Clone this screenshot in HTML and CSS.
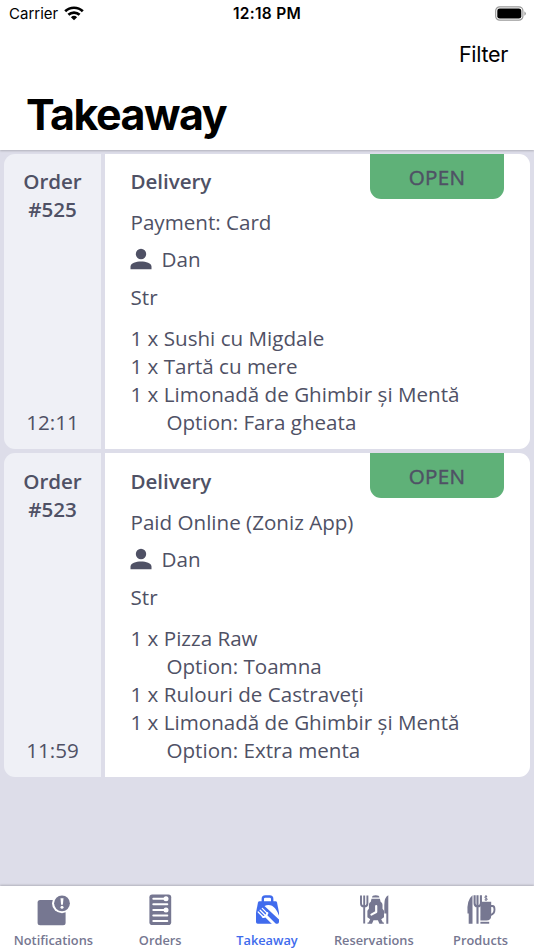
FILE: index.html
```html
<!DOCTYPE html>
<html lang="en">
<head>
<meta charset="utf-8">
<title>Takeaway</title>
<link rel="stylesheet" href="styles.css">
</head>
<body>
<div class="app">
  <header class="header">
    <div class="status">
      <div class="carrier"><span class="carrier-name">Carrier</span>
        <svg class="wifi" width="20" height="15" viewBox="0 0 20 15"><g fill="none" stroke="#000" stroke-width="2.7"><path d="M1.2 5.3a12.7 12.7 0 0 1 17.6 0"/><path d="M4.4 8.8a8.1 8.1 0 0 1 11.2 0"/></g><path d="M10 14.3l-3.1-3.1a4.5 4.5 0 0 1 6.2 0z"/></svg>
      </div>
      <span class="clock">12:18 PM</span>
      <svg class="battery" width="32" height="16" viewBox="0 0 32 16"><rect x=".7" y=".8" width="27.2" height="13.4" rx="4" fill="#fff" stroke="#999" stroke-width="1.2"/><rect x="2.3" y="2.4" width="24" height="10.2" rx="2.4"/><path d="M29.4 5.2q3 2.3 0 4.6z" fill="#999"/></svg>
    </div>
    <div class="actions"><span class="filter">Filter</span></div>
    <h1 class="title">Takeaway</h1>
  </header>
  <main class="orders">
    <article class="card">
      <div class="side"><div class="number">Order<br>#525</div><time>12:11</time></div>
      <div class="detail">
        <span class="badge">OPEN</span>
        <h2>Delivery</h2>
        <p class="payment">Payment: Card</p>
        <p class="person"><svg width="22" height="22" viewBox="0 0 22 22"><circle cx="11" cy="6" r="5.2"/><path d="M.5 21.3v-2.5C.5 15 6 13.5 11 13.5s10.500 1.500 10.500 5.300v2.500z"/></svg><span>Dan</span></p>
        <p class="street">Str</p>
        <ul>
          <li>1 x Sushi cu Migdale</li>
          <li>1 x Tartă cu mere</li>
          <li>1 x Limonadă de Ghimbir și Mentă</li>
          <li class="option">Option: Fara gheata</li>
        </ul>
      </div>
    </article>
    <article class="card">
      <div class="side"><div class="number">Order<br>#523</div><time>11:59</time></div>
      <div class="detail">
        <span class="badge">OPEN</span>
        <h2>Delivery</h2>
        <p class="payment">Paid Online (Zoniz App)</p>
        <p class="person"><svg width="22" height="22" viewBox="0 0 22 22"><circle cx="11" cy="6" r="5.2"/><path d="M.5 21.3v-2.5C.5 15 6 13.5 11 13.5s10.500 1.500 10.500 5.300v2.500z"/></svg><span>Dan</span></p>
        <p class="street">Str</p>
        <ul>
          <li>1 x Pizza Raw</li>
          <li class="option">Option: Toamna</li>
          <li>1 x Rulouri de Castraveți</li>
          <li>1 x Limonadă de Ghimbir și Mentă</li>
          <li class="option">Option: Extra menta</li>
        </ul>
      </div>
    </article>
  </main>
  <nav class="tabs">
    <div class="tab"><svg width="34" height="32" viewBox="0 0 34 32"><rect x="1.600" y="6" width="28" height="25.300" rx="2.500"/><circle cx="26" cy="9.300" r="10" fill="#fff"/><circle cx="26" cy="9.300" r="7.900"/><path d="M24.500 4.200h3l-.6 6.500h-1.800z" fill="#fff"/><circle cx="26" cy="13.200" r="1.500" fill="#fff"/></svg><span>Notifications</span></div>
    <div class="tab"><svg width="34" height="32" viewBox="0 0 34 32"><rect x="6.400" y=".4" width="21.800" height="30.600" rx="2.800"/><g stroke="#fff" stroke-width="2" stroke-linecap="round"><path d="M10.300 4.800h13M10.300 10.300h14M10.300 15.900h13M10.300 21.400h14M10.300 26.900h14"/></g><g fill="#fff"><circle cx="23" cy="4.800" r="2.500"/><circle cx="23" cy="15.900" r="2.500"/></g></svg><span>Orders</span></div>
    <div class="tab active"><svg width="34" height="32" viewBox="0 0 34 32"><path d="M12.800 8.500V5q0-2.500 2.500-2.500h4.400q2.500 0 2.500 2.500v3.500" fill="none" stroke="currentColor" stroke-width="2.400"/><path d="M9.500 7.300h16q1.200 0 1.500 1.300l2 9.900V28q0 1.700-1.700 1.700H7.700Q6 29.700 6 28v-9.500l2-9.900q.3-1.300 1.500-1.300z"/><path d="M14.500 12c3.800-2 8-.8 10.500 2.300 2.400 2.900 3.300 5.700 4.500 8.700v3z" fill="#fff"/><g fill="none" stroke="#fff" stroke-linecap="round"><path d="M8.200 18l5 5M10.200 16.200l5 5M12.300 14.400l5 5" stroke-width="1.300"/><path d="M12.700 22.700q2.500 1.500 4.700-3.600" stroke-width="2"/><path d="M16 22l8.500 8.500" stroke-width="3"/></g></svg><span>Takeaway</span></div>
    <div class="tab"><svg width="34" height="32" viewBox="0 0 34 32"><path d="M7.200 1.500v28M4 1.500v8q0 3 3.200 3t3.200-3v-8" fill="none" stroke="currentColor" stroke-width="1.900"/><path d="M27.300 19.500V11q0-8 4-9.800v28.600h-2V19.500z"/><path d="M15 3.600q0-2.300 3.700-2.300t3.700 2.300z"/><path d="M14.500 4.800h8.400l.7 3q1.900.8 1.900 3v4l1.500 2v6.500l-2.800 2 1.700 3.200h1v1.300h-4.500l-1.500-3.600h-4.400L15 29.800h-4.500v-1.300h1l1.700-3.200-2.800-2v-6.500l1.500-2v-4q0-2.200 1.900-3z"/><path d="M19.200 12v6l-4.800 2.600" fill="none" stroke="#fff" stroke-width="2.200" stroke-linecap="round" stroke-linejoin="round"/></svg><span>Reservations</span></div>
    <div class="tab"><svg width="34" height="32" viewBox="0 0 34 32"><path d="M4.700 29.700V19.500H3.500Q2.400 6 8.500 1.300v28.400z"/><path d="M10.600 1.300v8q0 3 2.900 3.200 3.400-.2 3.400-3.200v-8M13.500 1.300v28.400" fill="none" stroke="currentColor" stroke-width="2.100"/><path d="M16.400 7.700h10.800v14q0 4.800-4.800 4.800h-6z"/><path d="M27 12h1.500q2 0 2 3.500 0 4.500-4 5.500" fill="none" stroke="currentColor" stroke-width="1.900"/><path d="M16.400 27.800h8.800v1.900h-8.800z"/><path d="M23.200 2.600q-2.500-.9-2.500.6c0 1.200 2.600.7 2.600 2q0 1.400-2.700.6M22 1v5.800" fill="none" stroke="currentColor" stroke-width="1"/></svg><span>Products</span></div>
  </nav>
</div>
</body>
</html>
```
FILE: styles.css
```css
* { box-sizing: border-box; }
body { margin: 0; background: #dddde9; color: #4f5165; font-family: "Open Sans", sans-serif; }
.app { height: 950px; display: flex; flex-direction: column; overflow: hidden; }
.header { height: 150px; flex: none; background: #fff; color: #000; font-family: Inter, sans-serif; box-shadow: 0 1px 2px rgba(0,0,0,.2); z-index: 1; }
.status { height: 27px; display: grid; grid-template-columns: 1fr auto 1fr; align-items: center; padding: 0 7px 0 9px; font-size: 15px; }
.carrier { display: flex; align-items: center; gap: 6px; }
.wifi { margin-top: -1px; }
.clock { font-weight: 600; font-size: 15.500px; letter-spacing: .3px; margin-right: 2px; }
.battery { justify-self: end; }
.actions { display: flex; justify-content: flex-end; height: 55px; padding-right: 26px; }
.filter { font-size: 21.500px; line-height: 55px; letter-spacing: -.3px; }
.title { margin: 4px 0 0 26px; font-size: 43px; line-height: 56px; font-weight: 700; letter-spacing: -1.500px; }
.orders { flex: 1; padding: 3.600px 4px 0; display: flex; flex-direction: column; gap: 4px; }
.card { display: grid; grid-template-columns: 97px 1fr; gap: 3.500px; border-radius: 11px; overflow: hidden; }
.side { background: #eff0f6; display: flex; flex-direction: column; justify-content: space-between; align-items: center; text-align: center; padding: 13.400px 0 13px; font-size: 20.600px; line-height: 28px; }
.number { font-weight: 600; letter-spacing: -.05px; }
.detail { position: relative; background: #fff; padding: 13.400px 26px 12.800px; font-size: 20.600px; line-height: 28.100px; }
.detail h2 { margin: 0 0 13px; font-size: inherit; font-weight: 600; letter-spacing: -.05px; line-height: 28px; }
.detail p { margin: 0; }
.detail .payment { margin-bottom: 9.300px; }
.detail .person { display: flex; align-items: center; gap: 10px; margin-bottom: 9.300px; }
.person svg { fill: #4f5165; margin: -1px 0 0 -1px; }
.detail .street { margin-bottom: 13.300px; }
ul { list-style: none; margin: 0; padding: 0; }
.option { padding-left: 36px; }
.badge { position: absolute; top: 0; right: 26px; width: 134px; height: 45px; border-radius: 0 0 11px 11px; background: #5fb178; text-align: center; line-height: 46px; letter-spacing: .3px; -webkit-text-stroke: .45px currentColor; }
.tabs { height: 64px; flex: none; display: grid; grid-template-columns: repeat(5, 1fr); background: #fff; box-shadow: 0 -1px 2px rgba(0,0,0,.2); color: #767791; }
.tab { display: flex; flex-direction: column; align-items: center; padding-top: 8px; font-size: 12.800px; font-weight: 600; line-height: 18px; gap: 5px; }
.tab svg { fill: currentColor; }
.active { color: #406bed; }
```
